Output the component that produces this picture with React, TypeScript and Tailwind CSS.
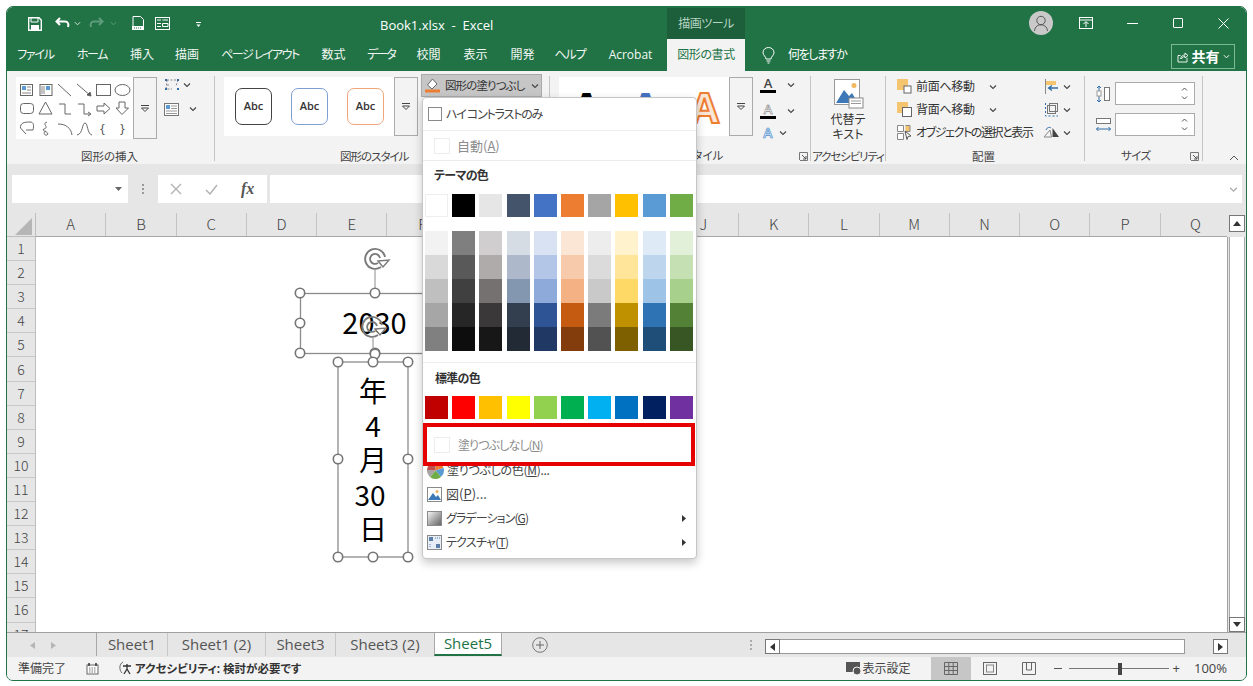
import React from "react";

const theme = ["#ffffff","#000000","#e7e6e6","#44546a","#4472c4","#ed7d31","#a5a5a5","#ffc000","#5b9bd5","#70ad47"];
const tints = [
  ["#f2f2f2","#d9d9d9","#bfbfbf","#a6a6a6","#808080"],
  ["#7f7f7f","#595959","#404040","#262626","#0d0d0d"],
  ["#d0cece","#afabab","#767171","#3a3838","#171717"],
  ["#d6dce4","#adb9ca","#8497b0","#333f4f","#222b35"],
  ["#d9e2f3","#b4c6e7","#8eaadb","#2f5496","#1f3864"],
  ["#fbe5d5","#f7caac","#f4b183","#c55a11","#833c0b"],
  ["#ededed","#dbdbdb","#c9c9c9","#7b7b7b","#525252"],
  ["#fff2cc","#ffe599","#ffd966","#bf9000","#7f6000"],
  ["#deeaf6","#bdd6ee","#9dc3e6","#2e74b5","#1f4e79"],
  ["#e2efd9","#c5e0b3","#a8d08d","#538135","#385623"],
];
const standard = ["#c00000","#ff0000","#ffc000","#ffff00","#92d050","#00b050","#00b0f0","#0070c0","#002060","#7030a0"];
const tabs = [
  { t: "ファイル", c: "w-[57px] tracking-[-1.2px]" }, { t: "ホーム", c: "w-[56px] tracking-[-1.5px]" }, { t: "挿入", c: "w-[44px]" }, { t: "描画", c: "w-[46px]" },
  { t: "ページ レイアウト", c: "w-[100px] tracking-[-1.5px]" }, { t: "数式", c: "w-[47px]" }, { t: "データ", c: "w-[48px] tracking-[-2px]" }, { t: "校閲", c: "w-[47px]" },
  { t: "表示", c: "w-[47px]" }, { t: "開発", c: "w-[47px]" }, { t: "ヘルプ", c: "w-[48px] tracking-[-1px]" }, { t: "Acrobat", c: "w-[73px]" },
];
const cols = "ABCDEFGHIJKLMNOPQ".split("");
const rows = Array.from({ length: 17 }, (_, i) => i + 1);

function Chev({ color = "#444", size = 8 }: { color?: string; size?: number }) {
  return <svg width={size} height={size} viewBox="0 0 8 8" className="shrink-0"><path d="M1 2.500 L4 5.500 L7 2.500" fill="none" stroke={color} strokeWidth="1.100" /></svg>;
}
function ScrollBtn({ h = "h-[62px]" }: { h?: string }) {
  return (
    <div className={`w-[24px] ${h} shrink-0 border border-[#ababab] bg-[#f3f3f3] flex items-center justify-center`}>
      <svg width="10" height="9" viewBox="0 0 10 9"><path d="M1 1.500H9" stroke="#444" /><path d="M1.500 4 L5 7.500 L8.500 4Z" fill="none" stroke="#444" /></svg>
    </div>
  );
}
function Label({ children, className = "" }: { children: React.ReactNode; className?: string }) {
  return <div className={`h-[16px] leading-[16px] text-[11.5px] text-[#444] whitespace-nowrap ${className}`}>{children}</div>;
}
function Launcher() {
  return <svg width="9" height="9" viewBox="0 0 9 9"><path d="M.5 8V.5H8.500V8.500H1" fill="none" stroke="#777" /><path d="M3 3 L7 7 M7 4V7H4" fill="none" stroke="#555" /></svg>;
}
function AbcCard({ c }: { c: string }) {
  return <div className={`w-[37px] h-[37px] rounded-[7px] border bg-white flex items-center justify-center text-[11px] font-semibold text-[#333] ${c}`}>Abc</div>;
}
function Handle({ x, y }: { x: number; y: number }) {
  return <circle cx={x} cy={y} r="4.700" fill="#fff" stroke="#757575" strokeWidth="1.600" />;
}
function Rotate({ x, y }: { x: number; y: number }) {
  return (
    <g fill="none" stroke="#7a7a7a">
      <path d={`M${x + 6} ${y + 8} A10 10 0 1 1 ${x + 10} ${y - 2}`} strokeWidth="1.900" />
      <path d={`M${x + 3} ${y + 4} A5 5 0 1 1 ${x + 5} ${y - 1}`} strokeWidth="1.800" />
      <path d={`M${x + 3} ${y + 2} L${x + 14} ${y + 1} L${x + 8} ${y + 8}Z`} fill="#fff" strokeWidth="1.400" />
    </g>
  );
}
function Spinner() {
  return (
    <div className="ml-[4px] w-[80px] h-[23px] bg-white border border-[#ababab] flex flex-col items-end justify-center pr-[6px] gap-[5px]">
      <svg width="7" height="4" viewBox="0 0 7 4"><path d="M1 3.500 L3.500 1 L6 3.500" fill="none" stroke="#555" /></svg>
      <svg width="7" height="4" viewBox="0 0 7 4"><path d="M1 .5 L3.500 3 L6 .5" fill="none" stroke="#555" /></svg>
    </div>
  );
}

export default function App() {
  return (
    <div className="relative w-[1253px] h-[686px] bg-white overflow-hidden [font-family:'Open_Sans','Noto_Sans_CJK_JP',sans-serif] [font-feature-settings:'palt'] text-[#444]">
      <div className="ml-[6px] mt-[6px] w-[1241px] h-[675px] rounded-[7px] border border-[#217346] overflow-hidden flex flex-col bg-[#e6e6e6]">
        {/* title bar */}
        <div className="h-[32px] bg-[#217346] flex shrink-0 text-white">
          <div className="w-[373px] flex items-center pl-[21px]">
            <svg width="14" height="14" viewBox="0 0 14 14" className="mt-[1px]"><path d="M.7.7H11L13.300 3V13.300H.7Z" fill="none" stroke="#fff" strokeWidth="1.400" /><path d="M3 1V5H10V1" fill="none" stroke="#fff" /><rect x="3" y="8" width="8" height="5" fill="#fff" /></svg>
            <svg width="15" height="12" viewBox="0 0 15 12" className="ml-[13px]"><path d="M5 1 L1.500 4.500 L5 8 M2 4.500H10C13 4.500 14 7 13 10" fill="none" stroke="#fff" strokeWidth="2" /></svg>
            <span className="ml-[4px]"><Chev color="#d5e6dc" size={7} /></span>
            <svg width="15" height="12" viewBox="0 0 15 12" className="ml-[8px]"><path d="M10 1 L13.500 4.500 L10 8 M13 4.500H5C2 4.500 1 7 2 10" fill="none" stroke="#5f9c7b" strokeWidth="2" /></svg>
            <span className="ml-[6px]"><Chev color="#5f9c7b" size={7} /></span>
            <svg width="13" height="15" viewBox="0 0 13 15" className="ml-[15px]"><path d="M1 .5H8.500L11.500 3.500V10M1 .5V10" fill="none" stroke="#fff" /><rect x="0" y="10" width="12" height="4" fill="#fff" /><path d="M2 12H10" stroke="#217346" strokeDasharray="1 1" /></svg>
            <svg width="15" height="13" viewBox="0 0 15 13" className="ml-[10px]"><rect x=".5" y=".5" width="14" height="12" fill="none" stroke="#fff" /><path d="M2 3H6M7.500 3H13M7.500 6.500H13V9.500H7.500ZM2 6.500H6M2 9.500H6" stroke="#fff" fill="none" /></svg>
            <svg width="7" height="7" viewBox="0 0 7 7" className="ml-[25px] mt-[2px]"><path d="M1 1.500H6" stroke="#fff" /><path d="M1.500 3.500H5.500L3.500 6Z" fill="#fff" /></svg>
          </div>
          <div className="w-[287px] flex items-center text-[13px] whitespace-pre pt-[5px]">Book1.xlsx  -  Excel</div>
          <div className="w-[78px] mt-[1px] bg-[#1c5f3a] flex items-center justify-center text-[12px] tracking-[-0.5px] text-[#b8d5c5]">描画ツール</div>
          <div className="flex-1" />
          <div className="w-[44px] flex items-center justify-center">
            <div className="w-[24px] h-[24px] rounded-full bg-[#c9c9c9] flex items-center justify-center">
              <svg width="16" height="18" viewBox="0 0 16 18"><circle cx="8" cy="6.500" r="4.200" fill="none" stroke="#555" /><path d="M1.500 17C2 12.500 5 10.800 8 10.800C11 10.800 14 12.500 14.500 17" fill="none" stroke="#555" /></svg>
            </div>
          </div>
          <div className="w-[46px] flex items-center justify-center"><svg width="14" height="12" viewBox="0 0 14 12"><rect x=".5" y=".5" width="13" height="11" fill="none" stroke="#fff" /><path d="M.5 3H13.500" stroke="#fff" /><path d="M7 10V5M4.500 7 L7 4.500 L9.500 7" fill="none" stroke="#fff" /></svg></div>
          <div className="w-[46px] flex items-center justify-center"><div className="w-[11px] h-[1px] bg-white" /></div>
          <div className="w-[46px] flex items-center justify-center"><div className="w-[10px] h-[10px] border border-white rounded-[1px]" /></div>
          <div className="w-[45px] flex items-center justify-center"><svg width="11" height="11" viewBox="0 0 11 11"><path d="M.5.5 L10.500 10.500 M10.500.5 L.5 10.500" stroke="#fff" /></svg></div>
        </div>
        {/* tabs */}
        <div className="h-[32px] bg-[#217346] flex shrink-0 text-white text-[12px]">
          {tabs.map((t) => (
            <div key={t.t} className={`${t.c} flex items-center justify-center whitespace-pre text-[#f2f7f4]`}>{t.t}</div>
          ))}
          <div className="w-[78px] bg-[#f3f3f3] text-[#217346] flex items-center justify-center tracking-[-0.4px]">図形の書式</div>
          <div className="ml-[17px] flex items-center">
            <svg width="13" height="17" viewBox="0 0 13 17"><path d="M4 12C4 9.500 1 8.500 1 5.500A5.500 5 0 0 1 12 5.500C12 8.500 9 9.500 9 12Z" fill="none" stroke="#fff" /><path d="M4.500 14H8.500M5.500 16H7.500" stroke="#fff" /></svg>
            <span className="ml-[13px] tracking-[-1.400px]">何をしますか</span>
          </div>
          <div className="flex-1" />
          <div className="w-[64px] h-[25px] mt-[5px] mr-[11px] border border-[#7db897] flex items-center justify-center gap-[3px]">
            <svg width="12" height="12" viewBox="0 0 12 12"><path d="M1 4.500V11H10V7M1 4.500H3.500M3.500 8C4 5 6 4 8 4V2 L11 4.500 L8 7V5.500C6 5.500 5 6.500 4.500 8" fill="none" stroke="#fff" strokeWidth=".9" /></svg>
            <span className="text-[14px] font-bold">共有</span>
            <Chev color="#fff" size={7} />
          </div>
        </div>
        {/* ribbon */}
        <div className="h-[93px] bg-[#f3f3f3] flex shrink-0 relative">
          {/* insert */}
          <div className="w-[207px] shrink-0 flex flex-col">
            <div className="h-[77px] pl-[9px] pt-[6px] flex">
              <div className="w-[117px] h-[62px] bg-white shrink-0">
                <svg width="117" height="62" viewBox="16 77 117 62" fill="none" stroke="#666" strokeWidth="1">
                  <rect x="20.500" y="84.500" width="12" height="11" stroke="#666" /><rect x="22" y="86" width="4" height="4" fill="#5b9bd5" stroke="none" /><path d="M27 87H31M27 90H31M22 93H31" stroke="#888" />
                  <rect x="40" y="84.500" width="12" height="11" stroke="#666" /><rect x="46" y="86" width="4" height="4" fill="#5b9bd5" stroke="none" /><path d="M42 86V94M44 86V94" stroke="#888" />
                  <path d="M58 84 L71 96" /><path d="M77 84 L91 96" /><path d="M91 96 L87 95 L90 92Z" fill="#555" />
                  <rect x="96.500" y="84.500" width="14" height="11" /><ellipse cx="122.500" cy="90" rx="7.500" ry="5.500" />
                  <rect x="20.500" y="103.500" width="13" height="10" rx="3" /><path d="M45.500 102 L52 114H39Z" />
                  <path d="M59 104H65V114H71" /><path d="M78 104H84V114H90M88 112 L91 114 L88 116" />
                  <path d="M97 106H104V103 L110 108.500 L104 114V111H97Z" /><path d="M119 102H125V108H128.500 L122 114.500 L116 108H119Z" />
                  <path d="M26 134L20.500 128C20 123 24 122 30 122C34 122 34 126 33 130H26" /><path d="M47 122 C41 124 50 127 44 129 C40 131 51 132 47 135 C44 136 43 132 46 131" />
                  <path d="M58 124C66 124 71 128 72 135" /><path d="M77 135C83 134 82 123 85 123C88 123 87 134 92 135" />
                  <text x="100" y="133" fontSize="13" fill="#555" stroke="none">{"{"}</text><text x="120" y="133" fontSize="13" fill="#555" stroke="none">{"}"}</text>
                </svg>
              </div>
              <ScrollBtn />
              <div className="ml-[7px] flex flex-col gap-[10px] pt-[1px]">
                <div className="flex items-center gap-[2px] h-[14px]">
                  <svg width="17" height="14" viewBox="0 0 17 14"><path d="M3 2H14M14 2 L12 8 M3 2 L2 11H8 M3 7 L6 7" fill="none" stroke="#888" strokeDasharray="2 1.500" /><g fill="#2f6ca8"><rect x="1" y="1" width="2" height="2" /><rect x="13" y="1" width="2" height="2" /><rect x="1" y="10" width="2" height="2" /><rect x="13" y="10" width="2" height="2" /></g></svg>
                  <Chev />
                </div>
                <div className="flex items-center gap-[10px] h-[14px]">
                  <svg width="15" height="13" viewBox="0 0 15 13"><rect x=".5" y=".5" width="14" height="12" fill="#fff" stroke="#777" /><rect x="2" y="2" width="4" height="4" fill="#5b9bd5" /><path d="M7 3H13M7 5.500H13M2 8H13M2 10.500H13" stroke="#999" /></svg>
                  <Chev />
                </div>
              </div>
            </div>
            <Label className="pl-[74px] pt-[1px]">図形の挿入</Label>
          </div>
          <div className="w-[1px] h-[85px] mt-[5px] bg-[#c4c4c4] shrink-0" />
          {/* styles */}
          <div className="w-[334px] shrink-0 flex flex-col">
            <div className="h-[77px] pl-[9px] flex">
              <div className="mt-[6px] w-[170px] h-[59px] bg-white shrink-0 flex items-center gap-[19px] pl-[11px]">
                <AbcCard c="border-[#444]" /><AbcCard c="border-[#7f9fd4]" /><AbcCard c="border-[#eea67a]" />
              </div>
              <div className="mt-[6px]"><ScrollBtn h="h-[59px]" /></div>
              <div className="ml-[3px] mt-[3px] w-[121px] h-[23px] bg-[#c6c6c6] border border-[#a9a9a9] flex items-center pl-[3px] text-[11.5px] text-[#333] shrink-0 whitespace-nowrap">
                <svg width="15" height="15" viewBox="0 0 15 15" className="mr-[5px] shrink-0"><path d="M7.500 1 L12 6 L7 11 L2.500 7Z" fill="#fff" stroke="#666" /><rect x="0" y="11.500" width="15" height="3" fill="#ed7d31" /></svg>
                <span className="tracking-[-0.9px]">図形の塗りつぶし</span><span className="ml-[6px]"><Chev /></span>
              </div>
            </div>
            <Label className="pl-[125px] pt-[1px] tracking-[-1px]">図形のスタイル</Label>
          </div>
          <div className="w-[1px] h-[85px] mt-[5px] bg-[#c4c4c4] shrink-0" />
          {/* word art */}
          <div className="w-[260px] shrink-0 flex flex-col">
            <div className="h-[77px] pl-[9px] flex">
              <div className="mt-[6px] w-[170px] h-[59px] bg-white shrink-0 flex gap-[30px] pl-[13px] pt-[9px] text-[42px] leading-[42px] font-bold">
                <span className="text-black">A</span>
                <span className="text-[#4472c4]">A</span>
                <span className="text-[#fbe5d5] [-webkit-text-stroke:2px_#ed7d31]">A</span>
              </div>
              <div className="mt-[6px]"><ScrollBtn h="h-[59px]" /></div>
              <div className="ml-[7px] mt-[4px] flex flex-col gap-[3px]">
                <div className="h-[20px] flex items-center">
                  <div className="w-[16px] flex flex-col items-center text-[13px] leading-[13px] font-semibold text-[#444]">A<div className="w-[16px] h-[3px] bg-black" /></div>
                  <span className="ml-[11px]"><Chev /></span>
                </div>
                <div className="h-[20px] flex items-center mt-[3px]">
                  <div className="w-[16px] flex flex-col items-center text-[13px] leading-[13px] font-semibold text-white [-webkit-text-stroke:0.5px_#666]">A<div className="w-[16px] h-[3px] bg-black" /></div>
                  <span className="ml-[11px]"><Chev /></span>
                </div>
                <div className="h-[18px] flex items-center">
                  <div className="w-[16px] text-center text-[14px] leading-[14px] font-semibold text-[#dbe9f7] [-webkit-text-stroke:0.7px_#4f8fcf]">A</div>
                  <span className="ml-[3px]"><Chev /></span>
                </div>
              </div>
            </div>
            <div className="flex items-center pt-[1px]">
              <Label className="pl-[60px]">ワードアートのスタイル</Label>
              <div className="flex-1" />
              <div className="pr-[2px] flex"><Launcher /></div>
            </div>
          </div>
          <div className="w-[1px] h-[85px] mt-[5px] bg-[#c4c4c4] shrink-0" />
          {/* alt text */}
          <div className="w-[74px] shrink-0 flex flex-col items-center">
            <div className="h-[77px] flex flex-col items-center pt-[8px]">
              <svg width="30" height="30" viewBox="0 0 30 30" className="mr-[-2px]"><rect x=".5" y=".5" width="25" height="25" fill="#fff" stroke="#999" /><circle cx="20" cy="6.500" r="2.500" fill="#f0b860" /><path d="M2 24 L10 11 L15 17 L18 14 L24 24Z" fill="#3d79b8" /><rect x="15" y="19" width="14" height="10" fill="#fff" stroke="#888" /><path d="M17 22H27M17 24.500H27" stroke="#999" /></svg>
              <div className="text-[12px] leading-[15px] text-center text-[#333] mt-[3px]">代替テ<br />キスト</div>
            </div>
            <Label className="pt-[1px] tracking-[-1.100px]">アクセシビリティ</Label>
          </div>
          <div className="w-[1px] h-[85px] mt-[5px] bg-[#c4c4c4] shrink-0" />
          {/* arrange */}
          <div className="w-[198px] shrink-0 flex flex-col">
            <div className="h-[77px] flex pl-[11px] pt-[4px]">
              <div className="w-[139px] flex flex-col text-[12px] text-[#333]">
                <div className="h-[23px] flex items-center">
                  <svg width="15" height="15" viewBox="0 0 15 15"><rect x="0" y="0" width="11" height="11" fill="#f4c56e" /><rect x="7" y="7" width="7" height="7" fill="#fff" stroke="#666" /></svg>
                  <span className="ml-[4px] w-[68px] tracking-[-0.3px]">前面へ移動</span><span className="ml-[5px]"><Chev /></span>
                </div>
                <div className="h-[23px] flex items-center">
                  <svg width="15" height="15" viewBox="0 0 15 15"><rect x="0" y="0" width="11" height="11" fill="#f4c56e" /><rect x="5.500" y="5.500" width="9" height="9" fill="#fff" stroke="#666" /></svg>
                  <span className="ml-[4px] w-[68px] tracking-[-0.3px]">背面へ移動</span><span className="ml-[5px]"><Chev /></span>
                </div>
                <div className="h-[23px] flex items-center whitespace-nowrap">
                  <svg width="15" height="15" viewBox="0 0 15 15" className="shrink-0"><path d="M.5.5H6.500V6.500H.5ZM.5 8.500H6.500V14.500H.5Z" fill="#fff" stroke="#888" /><path d="M8.500.5H13V6.500H8.500" fill="#f4c56e" stroke="#888" /><path d="M8 6 L14 11 L11 11.500 L10 14.500Z" fill="#fff" stroke="#555" /></svg>
                  <span className="ml-[4px] tracking-[-1.400px]">オブジェクトの選択と表示</span>
                </div>
              </div>
              <div className="ml-[8px] flex flex-col">
                <div className="h-[23px] flex items-center gap-[4px]">
                  <svg width="15" height="15" viewBox="0 0 15 15"><path d="M1.500 0V15" stroke="#888" /><rect x="2" y="2" width="10" height="4" fill="#f4c56e" /><path d="M14 9H5M8 6.500 L4.500 9 L8 11.500" fill="none" stroke="#2f6ca8" strokeWidth="1.300" /></svg>
                  <Chev />
                </div>
                <div className="h-[23px] flex items-center gap-[4px]">
                  <svg width="15" height="15" viewBox="0 0 15 15"><rect x="3.500" y="3.500" width="8" height="8" fill="none" stroke="#777" /><rect x="5.500" y="1.500" width="8" height="8" fill="none" stroke="#777" /><path d="M1.500 1V14H14" fill="none" stroke="#2f6ca8" strokeDasharray="2 2" /></svg>
                  <Chev />
                </div>
                <div className="h-[23px] flex items-center gap-[4px]">
                  <svg width="15" height="15" viewBox="0 0 15 15"><path d="M7.500 12H0 L6 5Z" fill="none" stroke="#888" /><path d="M8.500 12V3 L15 12Z" fill="#444" /><path d="M2 5C3 2 6 2 7 3" fill="none" stroke="#2f6ca8" /></svg>
                  <Chev />
                </div>
              </div>
            </div>
            <Label className="pl-[86px] pt-[1px]">配置</Label>
          </div>
          <div className="w-[1px] h-[85px] mt-[5px] bg-[#c4c4c4] shrink-0" />
          {/* size */}
          <div className="w-[117px] shrink-0 flex flex-col">
            <div className="h-[77px] pl-[11px] pt-[11px] flex flex-col gap-[8px]">
              <div className="flex items-center h-[23px]">
                <svg width="15" height="18" viewBox="0 0 15 18"><rect x="8.500" y="2.500" width="5" height="13" fill="#fff" stroke="#777" /><path d="M3 1V17M1 3 L3 1 L5 3M1 15 L3 17 L5 15" fill="none" stroke="#2f6ca8" /><rect x="1" y="6" width="4" height="5" fill="#fff" stroke="#999" /></svg>
                <Spinner />
              </div>
              <div className="flex items-center h-[23px]">
                <svg width="15" height="18" viewBox="0 0 15 18"><rect x="0.500" y="2.500" width="14" height="5" fill="#fff" stroke="#777" /><path d="M.5 13H14.500M2.500 11 L.5 13 L2.500 15M12.500 11 L14.500 13 L12.500 15" fill="none" stroke="#2f6ca8" /></svg>
                <Spinner />
              </div>
            </div>
            <div className="flex items-center pt-[1px]">
              <Label className="pl-[36px] tracking-[-0.6px]">サイズ</Label>
              <div className="flex-1" />
              <div className="pr-[3px] flex"><Launcher /></div>
            </div>
          </div>
          <div className="w-[1px] h-[85px] mt-[5px] bg-[#c4c4c4] shrink-0" />
          <div className="flex-1 flex items-end justify-end pr-[7px] pb-[3px]">
            <svg width="10" height="6" viewBox="0 0 10 6"><path d="M1 5 L5 1 L9 5" fill="none" stroke="#555" /></svg>
          </div>
        </div>
        {/* formula bar */}
        <div className="h-[49px] bg-[#e6e6e6] shrink-0 flex items-start pt-[11px] pl-[5px]">
          <div className="w-[116px] h-[28px] bg-white flex items-center justify-end pr-[6px]">
            <svg width="7" height="4" viewBox="0 0 7 4"><path d="M0 0H7L3.500 4Z" fill="#666" /></svg>
          </div>
          <div className="w-[30px] h-[28px] flex flex-col items-center justify-center gap-[2px]">
            <div className="w-[2px] h-[2px] bg-[#999]" /><div className="w-[2px] h-[2px] bg-[#999]" /><div className="w-[2px] h-[2px] bg-[#999]" />
          </div>
          <div className="w-[109px] h-[28px] bg-white flex items-center pl-[12px]">
            <svg width="12" height="12" viewBox="0 0 12 12"><path d="M1 1 L11 11 M11 1 L1 11" stroke="#b0b0b0" strokeWidth="1.300" /></svg>
            <svg width="13" height="11" viewBox="0 0 13 11" className="ml-[23px]"><path d="M1 6 L5 10 L12 1" fill="none" stroke="#b0b0b0" strokeWidth="1.400" /></svg>
            <span className="ml-[23px] text-[16px] italic font-bold text-[#555] [font-family:'Liberation_Serif',serif]">fx</span>
          </div>
          <div className="w-[972px] ml-[3px] h-[28px] bg-white flex items-center justify-end pr-[4px]">
            <Chev color="#aaa" size={9} />
          </div>
        </div>
        {/* headers */}
        <div className="h-[24px] shrink-0 flex bg-[#e6e6e6]">
          <div className="w-[29px] shrink-0 flex items-end justify-end pr-[3px] pb-[1px] border-r border-b border-[#bdbdbd]">
            <div className="w-0 h-0 border-l-[17px] border-l-transparent border-b-[17px] border-b-[#b5b5b5]" />
          </div>
          <div className="flex-1 min-w-0 flex overflow-hidden border-b border-[#a8a8a8]">
            {cols.map((c) => (
              <div key={c} className="w-[70.300px] shrink-0 border-r border-[#c4c4c4] flex items-center justify-center text-[15px] text-[#444] [font-family:'Noto_Sans_CJK_JP',sans-serif] font-light">{c}</div>
            ))}
          </div>
          <div className="w-[19px] shrink-0 flex justify-center pt-[2px]">
            <div className="w-[16px] h-[17px] bg-white border border-[#777] flex items-center justify-center">
              <svg width="8" height="5" viewBox="0 0 8 5"><path d="M0 5H8L4 0Z" fill="#333" /></svg>
            </div>
          </div>
        </div>
        {/* sheet */}
        <div className="flex-1 min-h-0 flex bg-white">
          <div className="w-[29px] shrink-0 bg-[#e6e6e6] border-r border-[#bdbdbd] overflow-hidden">
            {rows.map((r) => (
              <div key={r} className="h-[24.100px] flex items-center justify-center text-[14px] text-[#444] border-b border-[#c8c8c8] [font-family:'Noto_Sans_CJK_JP',sans-serif] font-light">{r}</div>
            ))}
          </div>
          <div className="flex-1" />
          <div className="w-[19px] shrink-0 bg-[#e6e6e6] border-l border-[#a0a0a0] flex flex-col items-center">
            <div className="w-[16px] flex-1 bg-white border-x border-[#aaa]" />
            <div className="w-[16px] h-[15px] bg-white border border-[#777] flex items-center justify-center">
              <svg width="8" height="5" viewBox="0 0 8 5"><path d="M0 0H8L4 5Z" fill="#333" /></svg>
            </div>
          </div>
        </div>
        {/* sheet tabs */}
        <div className="h-[25px] shrink-0 bg-[#e6e6e6] border-t border-[#a0a0a0] flex items-stretch">
          <div className="w-[89px] flex items-center pl-[23px] gap-[16px] shrink-0">
            <svg width="5" height="7" viewBox="0 0 5 7"><path d="M5 0V7L0 3.500Z" fill="#b5b5b5" /></svg>
            <svg width="5" height="7" viewBox="0 0 5 7"><path d="M0 0V7L5 3.500Z" fill="#b5b5b5" /></svg>
          </div>
          <div className="flex text-[15px] text-[#555] h-[23px]">
            <div className="w-[71px] border-l border-[#a8a8a8] flex items-center justify-center">Sheet1</div>
            <div className="w-[98px] border-l border-[#c8c8c8] flex items-center justify-center">Sheet1 (2)</div>
            <div className="w-[70px] border-l border-[#c8c8c8] flex items-center justify-center">Sheet3</div>
            <div className="w-[99px] border-l border-[#c8c8c8] flex items-center justify-center">Sheet3 (2)</div>
            <div className="w-[68px] bg-white border-b-2 border-[#217346] border-x border-x-[#a8a8a8] text-[#217346] flex items-center justify-center">Sheet5</div>
          </div>
          <div className="ml-[30px] flex items-center">
            <svg width="16" height="16" viewBox="0 0 16 16"><circle cx="8" cy="8" r="7.300" fill="none" stroke="#777" /><path d="M8 4V12M4 8H12" stroke="#666" /></svg>
          </div>
          <div className="ml-[202px] flex flex-col justify-center gap-[2px]">
            <div className="w-[2px] h-[2px] bg-[#aaa]" /><div className="w-[2px] h-[2px] bg-[#aaa]" /><div className="w-[2px] h-[2px] bg-[#aaa]" />
          </div>
          <div className="ml-[13px] flex items-center pt-[3px]">
            <div className="w-[15px] h-[15px] bg-white border border-[#777] flex items-center justify-center">
              <svg width="5" height="8" viewBox="0 0 5 8"><path d="M5 0V8L0 4Z" fill="#333" /></svg>
            </div>
            <div className="w-[405px] h-[15px] bg-white border-y border-r border-[#999]" />
            <div className="w-[28px]" />
            <div className="w-[15px] h-[15px] bg-white border border-[#777] flex items-center justify-center">
              <svg width="5" height="8" viewBox="0 0 5 8"><path d="M0 0V8L5 4Z" fill="#333" /></svg>
            </div>
          </div>
        </div>
        {/* status */}
        <div className="h-[23px] shrink-0 bg-[#f3f3f3] flex items-center text-[12px] text-[#444]">
          <span className="ml-[11px] w-[58px]">準備完了</span>
          <svg width="13" height="13" viewBox="0 0 13 13" className="ml-[10px]"><rect x="1" y="3" width="11" height="9" fill="#fff" stroke="#666" /><path d="M3 1V4M10 1V4" stroke="#333" strokeWidth="1.500" /><path d="M3 6H10M3 8H10M3 10H10" stroke="#777" strokeDasharray="1.500 1" /></svg>
          <svg width="15" height="15" viewBox="0 0 15 15" className="ml-[19px]"><path d="M5 1C1 3 1 9 4 12" fill="none" stroke="#666" /><path d="M9 3V8M5 5H13M6 13 L9 8 L12 13" fill="none" stroke="#333" strokeWidth="1.300" /></svg>
          <span className="ml-[2px] font-bold text-[#333] text-[11.5px]">アクセシビリティ: 検討が必要です</span>
          <div className="flex-1" />
          <svg width="17" height="15" viewBox="0 0 17 15"><rect x="0" y="1" width="14" height="10" fill="#555" /><circle cx="11" cy="10" r="4" fill="#555" stroke="#f3f3f3" /></svg>
          <span className="w-[68px] text-[12px]">表示設定</span>
          <div className="w-[40px] h-[23px] bg-[#c6c6c6] flex items-center justify-center">
            <svg width="14" height="13" viewBox="0 0 14 13"><path d="M.5.5H13.500V12.500H.5ZM.5 4.500H13.500M.5 8.500H13.500M4.800.5V12.500M9.200.5V12.500" fill="none" stroke="#666" /></svg>
          </div>
          <div className="w-[38px] flex items-center justify-center">
            <svg width="14" height="13" viewBox="0 0 14 13"><rect x=".5" y=".5" width="13" height="12" fill="none" stroke="#666" /><rect x="3.500" y="3" width="7" height="7" fill="none" stroke="#888" /></svg>
          </div>
          <div className="w-[40px] flex items-center justify-center">
            <svg width="14" height="13" viewBox="0 0 14 13"><path d="M.5.5H13.500V12.500H.5ZM4.500.5V8H9.500V.5" fill="none" stroke="#666" /></svg>
          </div>
          <span className="ml-[5px] w-[8px] h-[1px] bg-[#555]" />
          <div className="ml-[7px] w-[100px] h-[12px] flex items-center">
            <div className="w-[49px] h-[1px] bg-[#777]" /><div className="w-[4px] h-[12px] bg-[#444]" /><div className="w-[47px] h-[1px] bg-[#777]" />
          </div>
          <span className="ml-[4px] text-[13px] leading-none">+</span>
          <span className="ml-[14px] mr-[19px] text-[13px]">100%</span>
        </div>
      </div>

      {/* shapes on the canvas */}
      <svg className="absolute left-0 top-0" width="1253" height="686" viewBox="0 0 1253 686">
        <rect x="300.500" y="293.500" width="150" height="60" fill="#fff" stroke="#8c8c8c" strokeWidth="1.300" />
        <path d="M375 270V293" stroke="#8c8c8c" />
        <Rotate x={375} y={259} />
        <Handle x={300} y={293} /><Handle x={375} y={293} /><Handle x={300} y={323} /><Handle x={300} y={353} /><Handle x={375} y={353} />
        <rect x="338" y="362" width="70" height="195" fill="#fff" stroke="#8c8c8c" strokeWidth="1.300" />
        <text x="374.500" y="334" textAnchor="middle" fontSize="29" fill="#000" fontFamily="Noto Sans CJK JP">2030</text>
        <path d="M373 338V362" stroke="#8c8c8c" />
        <Rotate x={372} y={327} />
        <Handle x={375} y={354} />
        <Handle x={338} y={362} /><Handle x={373} y={362} /><Handle x={408} y={362} /><Handle x={338} y={459} /><Handle x={408} y={459} /><Handle x={338} y={557} /><Handle x={373} y={557} /><Handle x={408} y={557} />
      </svg>
      <div className="absolute left-[338px] top-[373px] w-[70px] flex flex-col items-center text-[28px] leading-[34.5px] text-black [font-family:'Noto_Sans_CJK_JP',sans-serif] font-normal">
        <span>年</span><span>4</span><span>月</span><span className="mr-[6px]">30</span><span>日</span>
      </div>

      {/* dropdown menu */}
      <div className="absolute left-[422px] top-[97px] w-[275px] h-[462px] bg-white border border-[#c6c6c6] rounded-[4px] shadow-[0_4px_10px_rgba(0,0,0,0.22)] flex flex-col text-[12px] text-[#444] [font-family:'Noto_Sans_CJK_JP',sans-serif]">
        <div className="h-[33px] shrink-0 flex items-center pl-[5px] border-b border-[#ececec]">
          <div className="w-[14px] h-[14px] border border-[#8a8a8a] bg-white" />
          <span className="ml-[4px] tracking-[-1.200px]">ハイ コントラストのみ</span>
        </div>
        <div className="h-[30px] shrink-0 flex items-center pl-[11px] border-b border-[#ececec] text-[#8c8c8c] text-[13px]">
          <div className="w-[16px] h-[16px] border border-[#ececec]" />
          <span className="ml-[7px]">自動(<span className="underline">A</span>)</span>
        </div>
        <div className="h-[31px] pb-[3px] shrink-0 flex items-center pl-[11px] font-bold text-[#333] tracking-[-0.7px]">テーマの色</div>
        <div className="flex pl-[2px] gap-[4.200px] mt-[2px] shrink-0">
          {theme.map((c, i) => (
            <div key={c} className={`w-[23px] h-[23px] ${i === 0 ? "border border-[#eeeeee]" : ""}`} style={{ backgroundColor: c }} />
          ))}
        </div>
        <div className="flex pl-[2px] gap-[4.200px] mt-[14px] shrink-0">
          {tints.map((col, i) => (
            <div key={i} className="w-[23px] flex flex-col">
              {col.map((c) => <div key={c} className="h-[24px]" style={{ backgroundColor: c }} />)}
            </div>
          ))}
        </div>
        <div className="h-[1px] bg-[#ececec] mt-[11px] shrink-0" />
        <div className="h-[33px] pb-[3px] shrink-0 flex items-center pl-[12px] font-bold text-[#333] tracking-[-0.7px]">標準の色</div>
        <div className="flex pl-[2px] gap-[4.200px] shrink-0">
          {standard.map((c) => <div key={c} className="w-[23px] h-[23px]" style={{ backgroundColor: c }} />)}
        </div>
        <div className="h-[37px] mt-[3px] shrink-0" />
        <div className="h-[24px] shrink-0 flex items-center pl-[4px] -mt-[1px]">
          <svg width="17" height="17" viewBox="0 0 17 17"><path d="M8.500 8.500L8.500 0A8.500 8.500 0 0 1 16.500 6Z" fill="#ed7d31" /><path d="M8.500 8.500L16.500 6A8.500 8.500 0 0 1 14 15Z" fill="#5b9bd5" /><path d="M8.500 8.500L14 15A8.500 8.500 0 0 1 3 15Z" fill="#70ad47" /><path d="M8.500 8.500L3 15A8.500 8.500 0 0 1 0 8Z" fill="#a5a5a5" /><path d="M8.500 8.500L0 8A8.500 8.500 0 0 1 8.500 0Z" fill="#c0504d" /></svg>
          <span className="ml-[3px] tracking-[-0.3px]">塗りつぶしの色(<span className="underline">M</span>)...</span>
        </div>
        <div className="h-[24px] shrink-0 flex items-center pl-[4px] text-[13px]">
          <svg width="15" height="15" viewBox="0 0 15 15"><rect x=".5" y=".5" width="14" height="14" fill="#fff" stroke="#8a8a8a" /><circle cx="10" cy="4.500" r="1.500" fill="#f2b35c" /><path d="M1 13 L6 6 L9 10 L11 8 L14 13Z" fill="#3d79b8" /></svg>
          <span className="ml-[4px]">図(<span className="underline">P</span>)...</span>
        </div>
        <div className="h-[24px] shrink-0 flex items-center pl-[4px] pr-[10px]">
          <div className="w-[15px] h-[15px] border border-[#8a8a8a] bg-gradient-to-br from-[#f5f5f5] to-[#666]" />
          <span className="ml-[4px] flex-1 tracking-[-0.900px]">グラデーション(<span className="underline">G</span>)</span>
          <svg width="4" height="7" viewBox="0 0 4 7"><path d="M0 0V7L4 3.500Z" fill="#333" /></svg>
        </div>
        <div className="h-[24px] shrink-0 flex items-center pl-[4px] pr-[10px]">
          <svg width="15" height="15" viewBox="0 0 15 15"><rect x=".5" y=".5" width="14" height="14" fill="#e8eef7" stroke="#8a8a8a" /><path d="M2 2H6V6H2ZM9 9H13V13H9Z" fill="#5b7fa8" /><path d="M8 3H13M3 9V13" stroke="#5b7fa8" strokeDasharray="1 1" /></svg>
          <span className="ml-[4px] flex-1 tracking-[-0.700px]">テクスチャ(<span className="underline">T</span>)</span>
          <svg width="4" height="7" viewBox="0 0 4 7"><path d="M0 0V7L4 3.500Z" fill="#333" /></svg>
        </div>
      </div>

      {/* red highlight */}
      <div className="absolute left-[423px] top-[423px] w-[272px] h-[43px] border-[4px] border-[#e60000] bg-white flex items-center pl-[7px] pt-[1px] text-[12px] text-[#8c8c8c] [font-family:'Noto_Sans_CJK_JP',sans-serif]">
        <div className="w-[16px] h-[16px] border border-[#ececec]" />
        <span className="ml-[8px] tracking-[-0.900px]">塗りつぶしなし(<span className="underline">N</span>)</span>
      </div>
    </div>
  );
}
